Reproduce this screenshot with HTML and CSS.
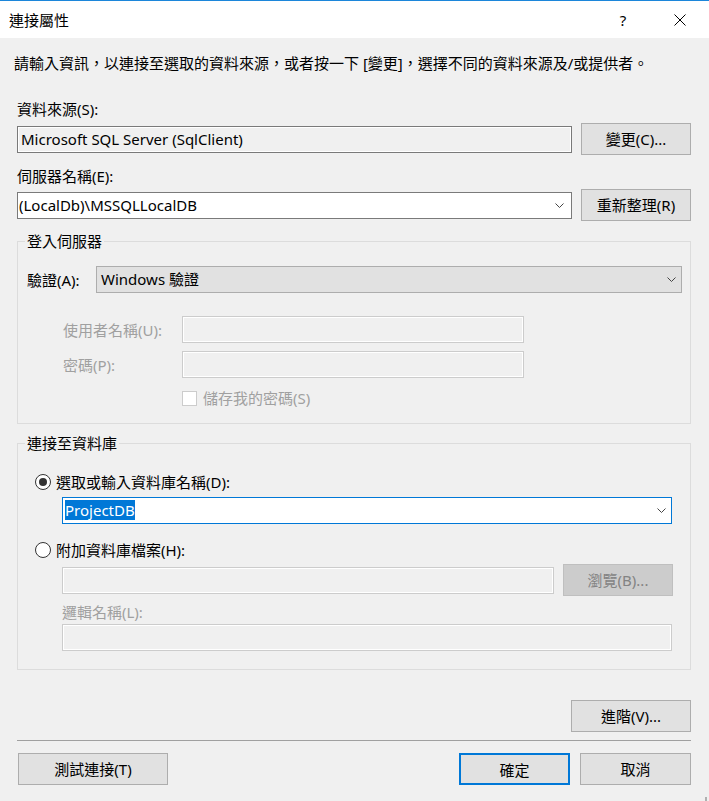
FILE: index.html
```html
<!DOCTYPE html>
<html lang="zh-Hant">
<head>
<meta charset="utf-8">
<title>連接屬性</title>
<link rel="stylesheet" href="styles.css">
</head>
<body>
<header class="titlebar">
  <span class="title">連接屬性</span>
  <span class="help">?</span>
  <span class="close"><svg width="12" height="12" viewBox="0 0 12 12"><path d="M0.5 0.5L11.5 11.5M11.5 0.5L0.5 11.5" stroke="#000" stroke-width="1" fill="none"/></svg></span>
</header>
<main class="content">
  <p class="intro">請輸入資訊，以連接至選取的資料來源，或者按一下 [變更]，選擇不同的資料來源及/或提供者。</p>

  <div class="label lbl-source">資料來源(S):</div>
  <div class="row row-source">
    <div class="field readonly">Microsoft SQL Server (SqlClient)</div>
    <button class="btn side">變更(C)...</button>
  </div>

  <div class="label lbl-server">伺服器名稱(E):</div>
  <div class="row row-server">
    <div class="field combo server-combo"><span class="val">(LocalDb)\MSSQLLocalDB</span><svg class="chev" width="9" height="5" viewBox="0 0 9 5"><path d="M0.5 0.5L4.5 4.5L8.5 0.5" fill="none" stroke="#444" stroke-width="1"/></svg></div>
    <button class="btn side">重新整理(R)</button>
  </div>

  <fieldset class="group group-login">
    <legend>登入伺服器</legend>
    <div class="auth-row">
      <span class="auth-label">驗證(A):</span>
      <div class="field combo auth-combo"><span class="val">Windows 驗證</span><svg class="chev" width="9" height="5" viewBox="0 0 9 5"><path d="M0.5 0.5L4.5 4.5L8.5 0.5" fill="none" stroke="#444" stroke-width="1"/></svg></div>
    </div>
    <div class="creds">
      <span class="dis">使用者名稱(U):</span>
      <div class="field disabled"></div>
      <span class="dis">密碼(P):</span>
      <div class="field disabled"></div>
    </div>
    <div class="check-row">
      <span class="checkbox"></span>
      <span class="dis">儲存我的密碼(S)</span>
    </div>
  </fieldset>

  <fieldset class="group group-db">
    <legend>連接至資料庫</legend>
    <div class="radio-row radio-first">
      <span class="radio checked"></span>
      <span>選取或輸入資料庫名稱(D):</span>
    </div>
    <div class="field combo db-combo"><span class="val"><span class="sel">ProjectDB</span></span><svg class="chev" width="9" height="5" viewBox="0 0 9 5"><path d="M0.5 0.5L4.5 4.5L8.5 0.5" fill="none" stroke="#444" stroke-width="1"/></svg></div>
    <div class="radio-row radio-second">
      <span class="radio"></span>
      <span>附加資料庫檔案(H):</span>
    </div>
    <div class="file-row">
      <div class="field disabled file-field"></div>
      <button class="btn side btn-disabled">瀏覽(B)...</button>
    </div>
    <div class="dis lbl-logical">邏輯名稱(L):</div>
    <div class="field disabled logical-field"></div>
  </fieldset>

  <div class="adv-row">
    <button class="btn btn-adv">進階(V)...</button>
  </div>
  <div class="sep"></div>
  <div class="footer">
    <button class="btn btn-test">測試連接(T)</button>
    <span class="spacer"></span>
    <button class="btn btn-ok">確定</button>
    <button class="btn btn-cancel">取消</button>
  </div>
</main>
<span class="grip"></span>
</body>
</html>
```

FILE: styles.css
```css
* { box-sizing: border-box; }
html, body { margin: 0; padding: 0; }
body {
  width: 709px;
  height: 801px;
  background: #f0f0f0;
  font-family: "Noto Sans", "Noto Sans CJK TC", sans-serif;
  font-size: 15px;
  color: #000;
  overflow: hidden;
  position: relative;
}
.titlebar {
  height: 38px;
  border-top: 1px solid #1c86da;
  background: #fff;
  display: flex;
  align-items: center;
  padding: 0 19px 0 9px;
}
.title { flex: 1; line-height: 20px; }
.help { width: 20px; text-align: center; line-height: 20px; }
.close { width: 20px; margin-left: 37px; display: flex; justify-content: center; }

.content { padding: 0 18px 0 17px; }
.intro { margin: 15px 0 0 -3px; line-height: 20px; white-space: nowrap; }
.label { line-height: 20px; }
.lbl-source { margin-top: 26px; }
.lbl-server { margin-top: 11px; }
.row { display: flex; align-items: center; }
.row-source { margin-top: 4px; }
.row-server { margin-top: 3px; }

.field {
  height: 27px;
  border: 1px solid #7a7a7a;
  background: #fff;
  line-height: 25px;
  padding: 0 3px;
  white-space: nowrap;
}
.row .field { flex: 1; }
.field.readonly { background: #f0f0f0; box-shadow: inset 0 0 0 1px #fff; }
.field.disabled { border-color: #cccccc; background: #f0f0f0; box-shadow: inset 0 0 0 1px #fff; }
.combo { display: flex; align-items: center; padding: 0 7px 0 1px; }
.combo .val { flex: 1; }
.chev { display: block; }

.btn {
  height: 32px;
  background: #e1e1e1;
  border: 1px solid #adadad;
  font: inherit;
  color: #000;
  padding: 0;
  line-height: 30px;
}
.btn.side { width: 110px; margin-left: 9px; flex: none; }
.btn-disabled { background: #cccccc; border-color: #bfbfbf; color: #838383; }

.group {
  border: 1px solid #dcdcdc;
  margin: 10px 0 0;
  padding: 0 8px 15px 9px;
  min-width: 0;
}
.group legend { padding: 0 2px; margin-left: -2px; line-height: 20px; }

.auth-row { display: flex; align-items: center; margin-top: 15px; }
.auth-label { width: 69px; flex: none; }
.auth-combo { flex: 1; background: #e1e1e1; border-color: #adadad; padding-left: 4px; padding-right: 5px; }

.dis { color: #a0a0a0; }
.creds {
  display: grid;
  grid-template-columns: 119px 342px;
  row-gap: 8px;
  align-items: center;
  margin-top: 23px;
  padding-left: 36px;
}
.check-row { display: flex; align-items: center; margin-top: 10px; padding-left: 155px; line-height: 20px; }
.checkbox { width: 15px; height: 15px; border: 1px solid #cccccc; background: #fff; margin-right: 6px; }

.group-db { margin-top: 9px; padding-bottom: 18px; }
.radio-row { display: flex; align-items: center; padding-left: 8px; line-height: 20px; }
.radio-first { margin-top: 19px; }
.radio-second { margin-top: 16px; }
.radio {
  width: 16px; height: 16px;
  border-radius: 50%;
  border: 1px solid #333;
  background: #fff;
  margin-right: 5px;
  position: relative;
  flex: none;
}
.radio.checked::after {
  content: "";
  position: absolute;
  left: 3px; top: 3px;
  width: 8px; height: 8px;
  border-radius: 50%;
  background: #333;
}
.db-combo { margin: 5px 10px 0 35px; border-color: #0078d7; padding-left: 2px; padding-right: 5px; }
.sel { display: inline-block; background: #0078d7; color: #fff; line-height: 20px; }
.file-row { display: flex; align-items: center; margin: 4px 9px 0 35px; }
.file-row .file-field { flex: 1; }
.lbl-logical { margin: 6px 0 0 35px; line-height: 20px; }
.logical-field { margin: 2px 10px 0 35px; }

.adv-row { display: flex; justify-content: flex-end; margin-top: 30px; }
.btn-adv { width: 120px; }
.sep { height: 1px; background: #a0a0a0; margin-top: 8px; }
.footer { display: flex; margin-top: 12px; }
.btn-test { width: 150px; margin-left: 1px; }
.spacer { flex: 1; }
.btn-ok { width: 111px; border: 2px solid #0078d7; margin-right: 10px; }
.btn-cancel { width: 111px; }

.grip { position: absolute; right: 2px; bottom: 0; width: 2px; height: 4px; background: #b0b0b0; }
```
